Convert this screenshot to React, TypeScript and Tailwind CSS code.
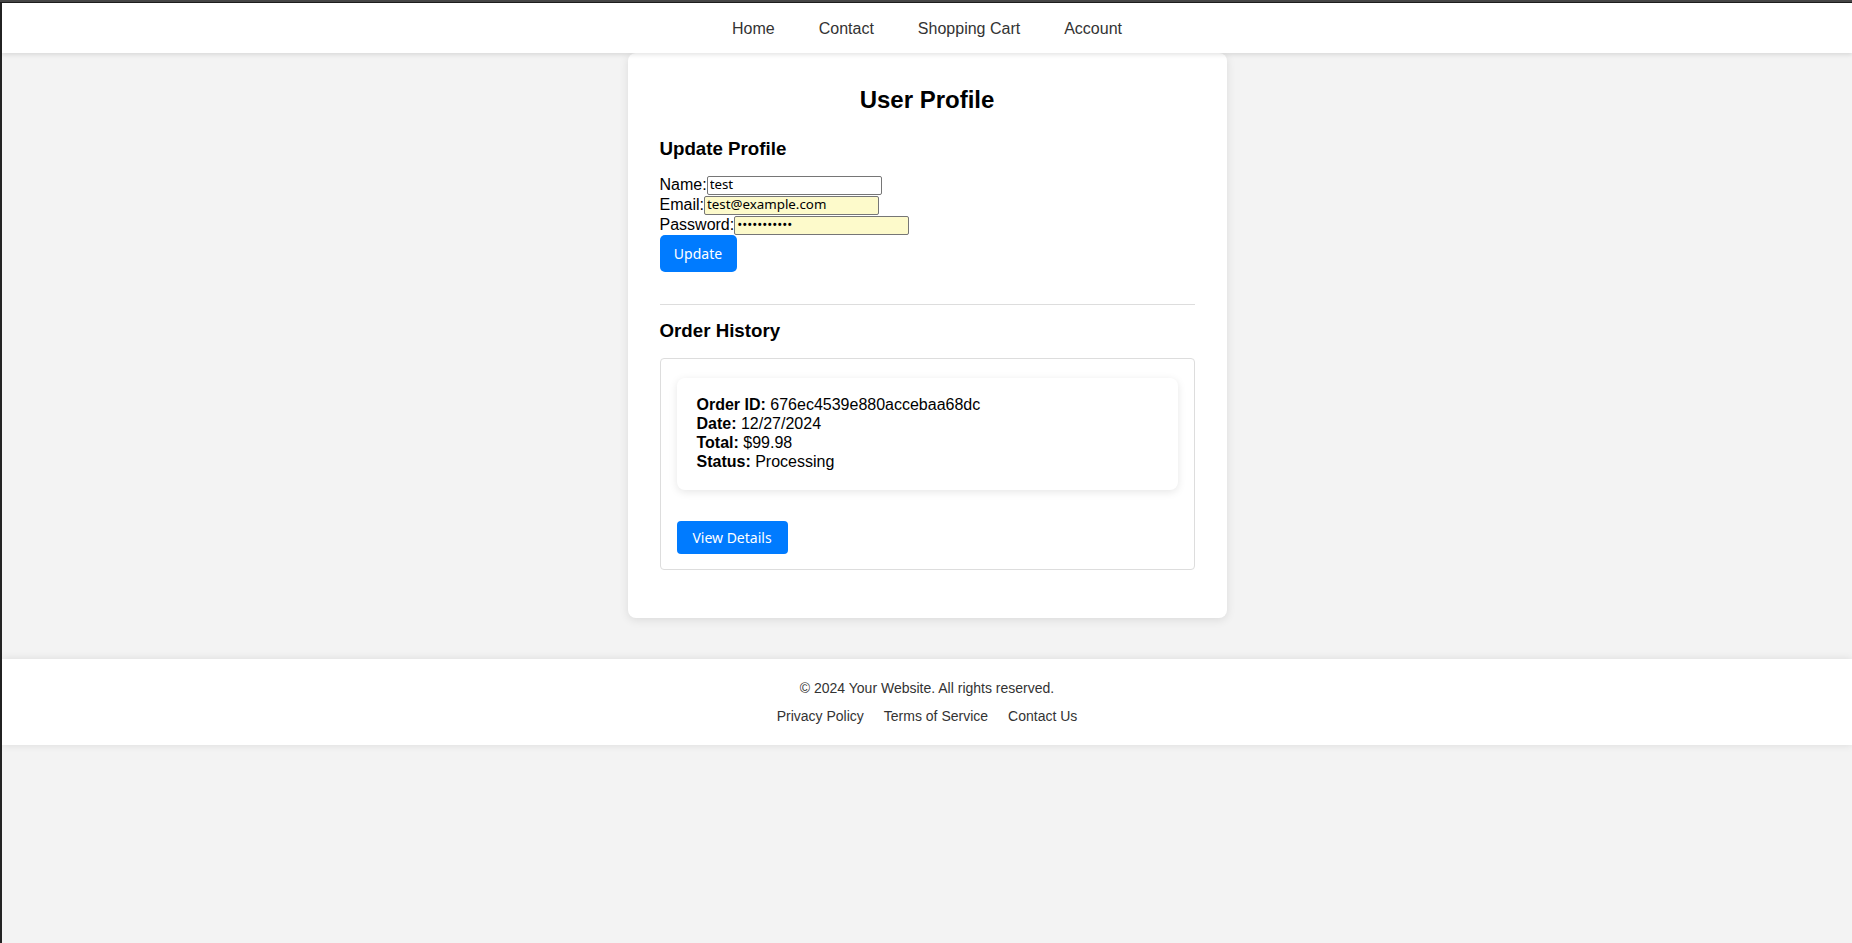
import React from "react";

export default function App() {
  const sys = "font-['Noto_Sans','DejaVu_Sans',sans-serif]";
  return (
    <div className="min-h-[943px] bg-[#f3f3f3] flex flex-col font-['Liberation_Sans',Arial,sans-serif] text-black">
      <div className="h-[3px] bg-[#464646] border-b border-[#1e1e1e]" />
      <div className="flex flex-1">
        <div className="w-[2px] bg-[#232323]" />
        <div className="flex-1 flex flex-col">
          <header className="relative z-10 h-[50px] pt-[2px] bg-white shadow-[0_2px_4px_rgba(0,0,0,0.1)] flex items-center justify-center gap-[44px] text-[16px] text-[#333]">
            <a>Home</a>
            <a>Contact</a>
            <a>Shopping Cart</a>
            <a>Account</a>
          </header>

          <main className="mx-auto w-[599px] bg-white rounded-[8px] shadow-[0_2px_10px_rgba(0,0,0,0.1)] px-[32px] pt-[33px] pb-[48px]">
            <h2 className="text-[24px] leading-[28px] font-bold text-center">User Profile</h2>
            <h3 className="mt-[24px] text-[18.72px] leading-[22px] font-bold">Update Profile</h3>
            <form className="mt-[15px] text-[16px]" onSubmit={(e) => e.preventDefault()}>
              <div className="flex items-center h-[20px]">
                <label>Name:</label>
                <input
                  defaultValue="test"
                  className={`${sys} w-[175px] h-[19px] border border-[#767676] rounded-[2px] px-[2px] text-[13.33px] bg-white`}
                />
              </div>
              <div className="flex items-center h-[20px]">
                <label>Email:</label>
                <input
                  defaultValue="test@example.com"
                  className={`${sys} w-[175px] h-[19px] border border-[#767676] rounded-[2px] px-[2px] text-[13.33px] bg-[#fdfacb]`}
                />
              </div>
              <div className="flex items-center h-[20px]">
                <label>Password:</label>
                <input
                  type="password"
                  defaultValue="12345678901"
                  className={`${sys} w-[175px] h-[19px] border border-[#767676] rounded-[2px] px-[2px] text-[13.33px] bg-[#fdfacb]`}
                />
              </div>
              <button
                className={`${sys} h-[37px] w-[77px] rounded-[5px] bg-[#007bff] text-white text-[14px]`}
              >
                Update
              </button>
            </form>

            <div className="mt-[32px] border-t border-[#dddddd]" />

            <h3 className="mt-[15px] text-[18.72px] leading-[22px] font-bold">Order History</h3>

            <div className="mt-[16px] border border-[#dddddd] rounded-[4px] pt-[19px] px-[16px] pb-[15px]">
              <div className="rounded-[8px] bg-white shadow-[0_2px_8px_rgba(0,0,0,0.1)] px-[20px] pt-[17px] pb-[19px] text-[16px] leading-[19px]">
                <div>
                  <b>Order ID:</b> 676ec4539e880accebaa68dc
                </div>
                <div>
                  <b>Date:</b> 12/27/2024
                </div>
                <div>
                  <b>Total:</b> $99.98
                </div>
                <div>
                  <b>Status:</b> Processing
                </div>
              </div>
              <button
                className={`${sys} mt-[31px] h-[33px] w-[111px] rounded-[4px] bg-[#007bff] text-white text-[14px]`}
              >
                View Details
              </button>
            </div>
          </main>

          <footer className="mt-[41px] bg-white shadow-[0_0_8px_rgba(0,0,0,0.1)] text-center text-[14px] leading-[16px] text-[#333] pt-[21px] pb-[21px]">
            <p>© 2024 Your Website. All rights reserved.</p>
            <div className="mt-[12px] flex justify-center gap-[20px]">
              <a>Privacy Policy</a>
              <a>Terms of Service</a>
              <a>Contact Us</a>
            </div>
          </footer>
          <div className="flex-1" />
        </div>
      </div>
    </div>
  );
}
